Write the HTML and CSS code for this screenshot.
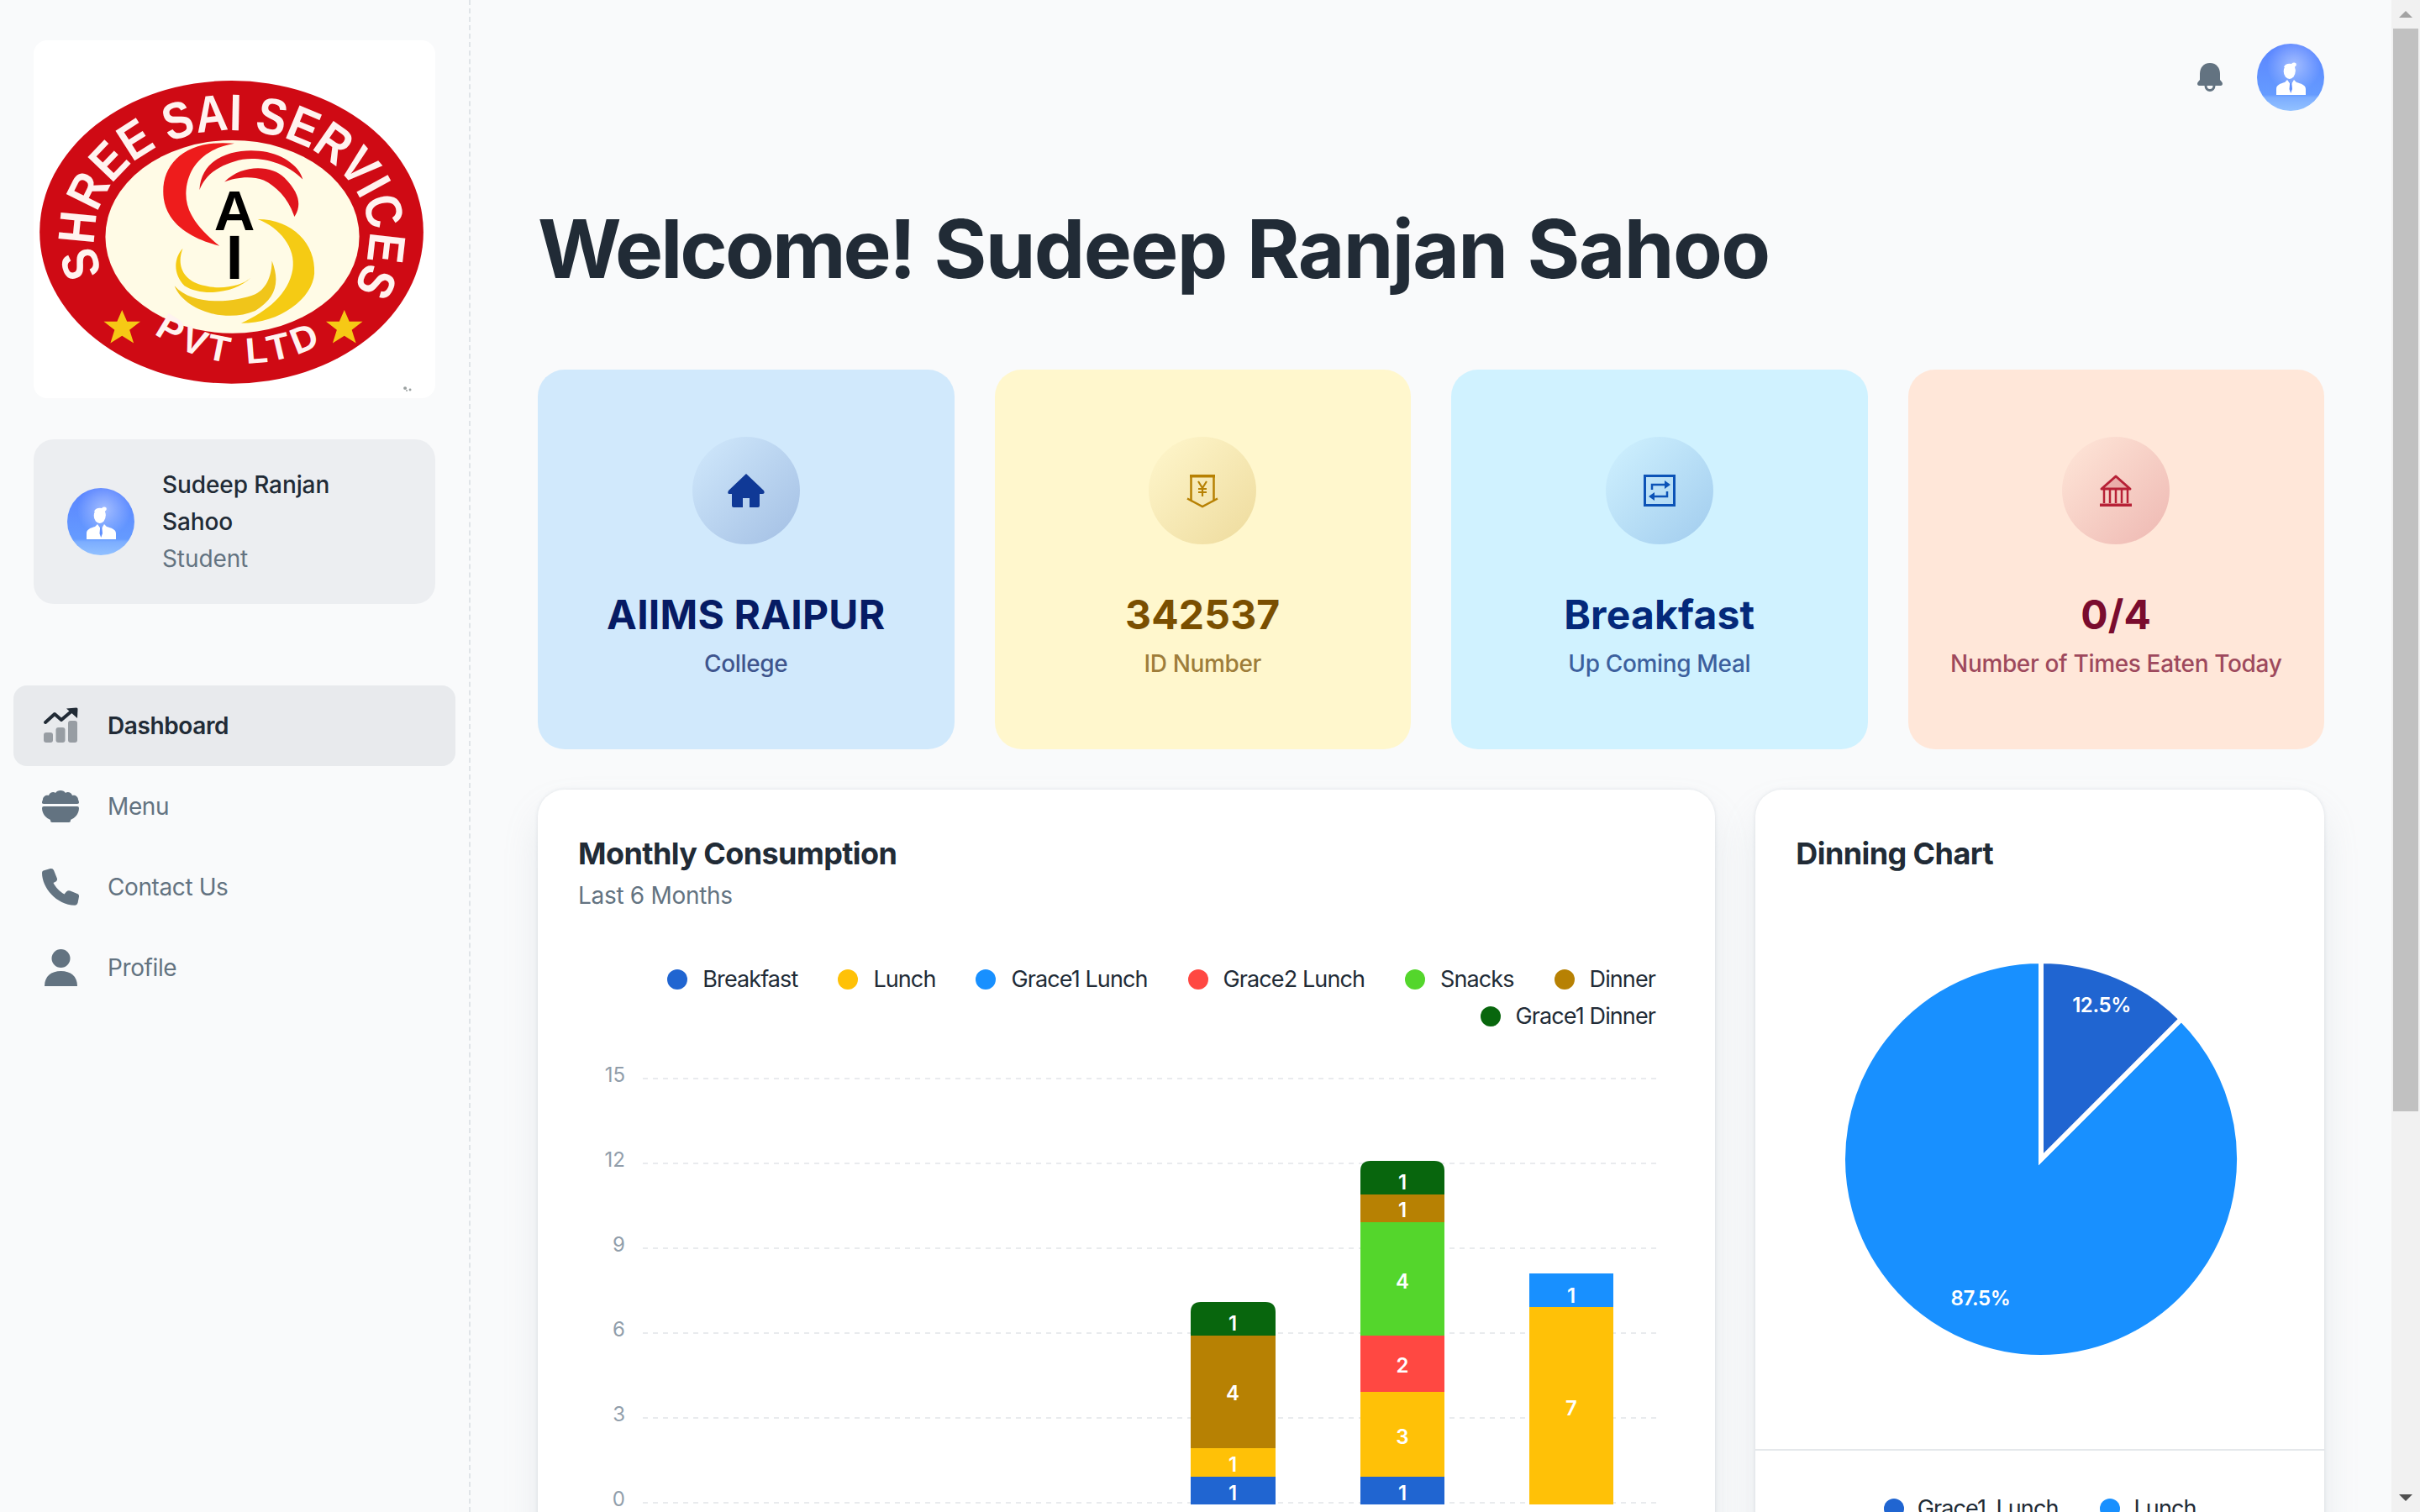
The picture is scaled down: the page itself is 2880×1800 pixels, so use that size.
FILE: index.html
```html
<!DOCTYPE html>
<html>
  <head>
    <title>Dashboard</title>
    <link rel="stylesheet" href="styles.css">
  </head>
  <body>
    <aside class="sidebar">
      <div class="logo">
        <svg viewBox="0 0 480 430" width="478" height="426">
          <defs>
            <path id="logoTop" d="M82 280A165 128 0 1 1 340 336"/>
            <path id="logoBottom" d="M143 352Q238 418 348 364"/>
          </defs>
          <ellipse cx="236.5" cy="230.5" rx="230.5" ry="182" fill="#cf0a14"/>
          <ellipse cx="237.5" cy="236" rx="152.5" ry="116" fill="#fffbe6"/>
          <text class="logo-ring" font-size="62"><textPath href="#logoTop" textLength="572" lengthAdjust="spacingAndGlyphs">SHREE SAI SERVICES</textPath></text>
          <text class="logo-ring" font-size="44"><textPath href="#logoBottom" textLength="212">PVT LTD</textPath></text>
          <path fill="#f6c915" d="M105 324l6 14h16l-13 10 5 16-14-9-14 9 5-16-13-10h16zM372 324l6 14h16l-13 10 5 16-14-9-14 9 5-16-13-10h16z"/>
          <path fill="#ee1c1c" d="M240 124C180 118 150 150 155 190C160 225 195 240 222 247C195 225 180 205 182 180C185 150 205 130 240 124Z"/>
          <path fill="#e0141c" d="M198 180C200 140 240 130 270 133C295 135 318 150 322 167C300 145 270 140 250 143C225 148 205 160 198 180Z"/>
          <path fill="#e0141c" d="M228 170C250 148 285 150 300 165C320 185 320 200 312 212C305 190 290 175 275 168C260 162 240 165 228 170Z"/>
          <path fill="#f5cb14" d="M268 215C310 215 338 245 336 280C334 310 295 340 248 340C280 325 305 305 310 275C314 250 295 225 268 215Z"/>
          <path fill="#f0c51a" d="M168 295C190 320 240 315 265 305C280 298 285 280 285 265C295 290 290 310 265 325C230 340 180 325 168 295Z"/>
          <path fill="#f5cb14" d="M178 250C170 270 178 290 205 295C225 300 250 295 260 285C240 305 200 308 180 295C165 280 168 260 178 250Z"/>
          <text class="logo-letter" x="240" y="228" font-size="68">A</text>
          <text class="logo-letter" x="240" y="287" font-size="75">I</text>
          <g fill="#9aa0a0"><circle cx="445" cy="418" r="2"/><circle cx="451" cy="420" r="1.5"/><circle cx="447" cy="421" r="1"/></g>
        </svg>
      </div>

      <div class="user-card">
        <svg class="avatar" viewBox="0 0 80 80">
          <use href="#avatarArt"/>
        </svg>
        <div class="user-text">
          <div class="user-name">Sudeep Ranjan Sahoo</div>
          <div class="user-role">Student</div>
        </div>
      </div>

      <nav class="nav">
        <a class="nav-item active">
          <svg class="nav-icon" viewBox="0 0 48 48">
            <g fill="#212b36" opacity=".4">
              <rect x="4" y="32" width="11" height="12" rx="3"/>
              <rect x="18.5" y="26" width="11" height="18" rx="3"/>
              <rect x="33" y="18" width="11" height="26" rx="3"/>
            </g>
            <path d="M6 20L17 10L25 17L38 6" fill="none" stroke="#212b36" stroke-width="4" stroke-linecap="round" stroke-linejoin="round"/>
            <path d="M31 3.5L43 2.5Q44.5 2.5 44.5 4L44 15Z" fill="#212b36"/>
          </svg>
          <span>Dashboard</span>
        </a>
        <a class="nav-item">
          <svg class="nav-icon" viewBox="0 0 48 48">
            <path d="M4 21C1 21 2 18 3 16C3 12 7 10 10 11C11 7 16 6 18 8C20 4 28 4 30 8C32 6 37 7 38 11C41 10 45 12 45 16C46 18 47 21 44 21Z"/>
            <path d="M4 24H44Q46 24 46 26C46 33 41 38 36 40V41Q36 43 34 43H14Q12 43 12 41V40C7 38 2 33 2 26Q2 24 4 24Z"/>
          </svg>
          <span>Menu</span>
        </a>
        <a class="nav-item">
          <svg class="nav-icon" viewBox="0 0 48 48">
            <path d="M3.500 4.500L12 2Q15 1.500 16 4L20 14Q20.500 16 18.500 17.500L15.500 19C18 24 23 29.500 28.500 32.500L31 29.500Q33 27.500 35.500 28.500L44 32Q46.500 33 46 35.500L44.500 43Q43.500 46 41 45.800C19 45 2 25 2 7Q2 5 3.500 4.500Z"/>
          </svg>
          <span>Contact Us</span>
        </a>
        <a class="nav-item">
          <svg class="nav-icon" viewBox="0 0 48 48">
            <circle cx="24.500" cy="13" r="11"/>
            <path d="M5 46C5 34 13 28 24.500 28C36 28 44 34 44 46Z"/>
          </svg>
          <span>Profile</span>
        </a>
      </nav>
    </aside>

    <main class="main">
      <header class="topbar">
        <svg class="bell" viewBox="0 0 48 48">
          <path d="M24 7C16 7 12 13 12 20V27L9.500 30Q8 33 11 34H37Q40 33 38.500 30L36 27V20C36 13 32 7 24 7Z"/>
          <path d="M19 34a5 5.500 0 0 0 10 0" fill="none" stroke="#637381" stroke-width="3"/>
        </svg>
        <svg class="avatar" viewBox="0 0 80 80">
          <g id="avatarArt">
            <defs>
              <linearGradient id="avatarBase" x1="0" y1="0" x2="0" y2="1">
                <stop offset="0" stop-color="#5a84ff"/>
                <stop offset=".76" stop-color="#659bff"/>
                <stop offset=".8" stop-color="#7cadff"/>
                <stop offset="1" stop-color="#92c1ff"/>
              </linearGradient>
              <radialGradient id="avatarGlow" cx=".55" cy=".32" r=".4">
                <stop offset="0" stop-color="#b4c9ff" stop-opacity=".8"/>
                <stop offset="1" stop-color="#b4c9ff" stop-opacity="0"/>
              </radialGradient>
            </defs>
            <circle cx="40" cy="40" r="40" fill="url(#avatarBase)"/>
            <circle cx="40" cy="40" r="40" fill="url(#avatarGlow)"/>
            <ellipse cx="38.700" cy="33" rx="7" ry="9" fill="#fff"/>
            <path d="M32 28Q34 23 41 24Q44 21.500 46.500 23.500Q47.500 26 45 27.500L45.700 33Z" fill="#fff"/>
            <path d="M23 61V54C23 49 28 47.500 33 46L36 43L39.500 48H41L44 43L47 46C52 47.500 58 49 58 54V61Z" fill="#fff"/>
            <path d="M39.200 47H41.300L42 54L40.200 59L38.500 54Z" fill="#5f8fff"/>
          </g>
        </svg>
      </header>

      <h1 class="page-title"><span class="greet">Welcome!</span> Sudeep Ranjan Sahoo</h1>

      <section class="stats">
        <div class="stat stat-blue">
          <div class="stat-icon">
            <svg viewBox="0 0 48 48">
              <path fill="currentColor" d="M24 4L45 24Q47 28 43 28H40V42Q40 44 38 44H28V33H20V44H9Q7 44 7 42V28H4Q1 28 3 24Z"/>
            </svg>
          </div>
          <div class="stat-value">AIIMS RAIPUR</div>
          <div class="stat-label">College</div>
        </div>
        <div class="stat stat-yellow">
          <div class="stat-icon">
            <svg viewBox="0 0 48 48">
              <path fill="currentColor" d="M9 5H39V8.500H9Z"/>
              <path fill="none" stroke="currentColor" stroke-width="2.500" d="M10.500 7V36L6 33.500M37.500 7V36L42 33.500M6 33.500L24 43L42 33.500"/>
              <path fill="none" stroke="currentColor" stroke-width="2.200" d="M19 13L24 21L29 13M24 21V31M19 22H29M19 26H29"/>
            </svg>
          </div>
          <div class="stat-value">342537</div>
          <div class="stat-label">ID Number</div>
        </div>
        <div class="stat stat-cyan">
          <div class="stat-icon">
            <svg viewBox="0 0 48 48">
              <rect x="6.500" y="6.500" width="35" height="35" fill="none" stroke="currentColor" stroke-width="3"/>
              <path fill="none" stroke="currentColor" stroke-width="2.500" d="M15 23V17H31M33 25V31H17"/>
              <path fill="currentColor" d="M30 12L37 17L30 22ZM18 26L11 31L18 36Z"/>
            </svg>
          </div>
          <div class="stat-value">Breakfast</div>
          <div class="stat-label">Up Coming Meal</div>
        </div>
        <div class="stat stat-red">
          <div class="stat-icon">
            <svg viewBox="0 0 48 48">
              <path fill="currentColor" fill-opacity=".2" stroke="currentColor" stroke-width="3" stroke-linejoin="round" d="M24 7L41 22H7Z"/>
              <path fill="none" stroke="currentColor" stroke-width="2.500" d="M10 23V39M17 23V39M24 23V39M31 23V39M38 23V39"/>
              <rect x="5" y="39.500" width="38" height="3.500" fill="currentColor"/>
            </svg>
          </div>
          <div class="stat-value">0/4</div>
          <div class="stat-label">Number of Times Eaten Today</div>
        </div>
      </section>

      <section class="charts">
        <div class="card card-wide">
          <h2 class="card-title">Monthly Consumption</h2>
          <p class="card-sub">Last 6 Months</p>
          <div class="legend legend-bars">
            <span class="legend-item"><i class="dot c-breakfast"></i>Breakfast</span>
            <span class="legend-item"><i class="dot c-lunch"></i>Lunch</span>
            <span class="legend-item"><i class="dot c-grace1"></i>Grace1 Lunch</span>
            <span class="legend-item"><i class="dot c-grace2"></i>Grace2 Lunch</span>
            <span class="legend-item"><i class="dot c-snacks"></i>Snacks</span>
            <span class="legend-item"><i class="dot c-dinner"></i>Dinner</span>
            <span class="legend-item"><i class="dot c-gdinner"></i>Grace1 Dinner</span>
          </div>
          <svg class="bar-chart" viewBox="688 1232 1304 600" width="1304" height="600">
            <g class="grid">
              <path d="M765 1284H1971M765 1385H1971M765 1486H1971M765 1587H1971M765 1688H1971M765 1789H1971"/>
            </g>
            <g class="axis">
              <text x="744" y="1288">15</text>
              <text x="744" y="1389">12</text>
              <text x="744" y="1490">9</text>
              <text x="744" y="1591">6</text>
              <text x="744" y="1692">3</text>
              <text x="744" y="1793">0</text>
            </g>
            <rect x="1417" y="1758" width="101" height="33" fill="#2065d1"/>
            <rect x="1417" y="1724" width="101" height="34" fill="#ffc107"/>
            <rect x="1417" y="1590" width="101" height="134" fill="#b78103"/>
            <path d="M1417 1590V1562Q1417 1550 1429 1550H1506Q1518 1550 1518 1562V1590Z" fill="#08660d"/>

            <rect x="1619" y="1758" width="100" height="33" fill="#2065d1"/>
            <rect x="1619" y="1657" width="100" height="101" fill="#ffc107"/>
            <rect x="1619" y="1590" width="100" height="67" fill="#ff4842"/>
            <rect x="1619" y="1455" width="100" height="135" fill="#54d62c"/>
            <rect x="1619" y="1422" width="100" height="33" fill="#b78103"/>
            <path d="M1619 1422V1394Q1619 1382 1631 1382H1707Q1719 1382 1719 1394V1422Z" fill="#08660d"/>

            <rect x="1820" y="1556" width="100" height="235" fill="#ffc107"/>
            <rect x="1820" y="1516" width="100" height="40" fill="#1890ff"/>

            <g class="bar-values">
              <text x="1467" y="1786">1</text>
              <text x="1467" y="1752">1</text>
              <text x="1467" y="1667">4</text>
              <text x="1467" y="1584">1</text>
              <text x="1669" y="1786">1</text>
              <text x="1669" y="1719">3</text>
              <text x="1669" y="1634">2</text>
              <text x="1669" y="1534">4</text>
              <text x="1669" y="1449">1</text>
              <text x="1669" y="1416">1</text>
              <text x="1870" y="1685">7</text>
              <text x="1870" y="1551">1</text>
            </g>
          </svg>
        </div>

        <div class="card card-narrow">
          <h2 class="card-title card-title-pie">Dinning Chart</h2>
          <svg class="pie-chart" viewBox="2089 1044 677 681" width="677" height="681">
            <g stroke="#fff" stroke-width="6">
              <path d="M2429 1380L2429 1144A236 236 0 1 0 2595.900 1213.100Z" fill="#1890ff"/>
              <path d="M2429 1380L2429 1144A236 236 0 0 1 2595.900 1213.100Z" fill="#2065d1"/>
            </g>
            <g class="pie-values">
              <text x="2501" y="1205">12.5%</text>
              <text x="2357" y="1554">87.5%</text>
            </g>
          </svg>
          <div class="legend legend-pie">
            <span class="legend-item"><i class="dot c-breakfast"></i>Grace1_Lunch</span>
            <span class="legend-item"><i class="dot c-grace1"></i>Lunch</span>
          </div>
        </div>
      </section>
    </main>

    <div class="scrollbar">
      <div class="scroll-btn"><i class="arrow-up"></i></div>
      <div class="scroll-track"><div class="scroll-thumb"></div></div>
      <div class="scroll-btn"><i class="arrow-down"></i></div>
    </div>
  </body>
</html>
```

FILE: styles.css
```css
* {
  box-sizing: border-box;
}
html, body {
  margin: 0;
  height: 100%;
}
body {
  display: flex;
  height: 1800px;
  overflow: hidden;
  background: #f9fafb;
  color: #212b36;
  font-family: Inter, "Liberation Sans", sans-serif;
  font-size: 28px;
  line-height: 44px;
}

/* sidebar */
.sidebar {
  flex: 0 0 560px;
  border-right: 2px dashed rgba(145, 158, 171, .24);
  padding-top: 48px;
}
.logo {
  width: 478px;
  height: 426px;
  margin-left: 40px;
  background: #fff;
  border-radius: 16px;
  overflow: hidden;
}
.logo svg {
  display: block;
}
.logo-ring {
  fill: #fff3f0;
  font-family: "Liberation Sans", sans-serif;
  font-weight: 700;
}
.logo-letter {
  fill: #000;
  font-family: "Liberation Sans", sans-serif;
  font-weight: 700;
  text-anchor: middle;
}
.user-card {
  display: flex;
  align-items: center;
  width: 478px;
  margin: 49px 0 0 40px;
  padding: 32px 40px;
  background: rgba(145, 158, 171, .12);
  border-radius: 24px;
}
.avatar {
  flex: 0 0 80px;
  width: 80px;
  height: 80px;
}
.user-text {
  margin-left: 33px;
  width: 240px;
  letter-spacing: -.1px;
}
.user-name {
  font-weight: 500;
}
.user-role {
  color: #637381;
}
.nav {
  margin: 97px 16px 0;
}
.nav-item {
  display: flex;
  align-items: center;
  gap: 32px;
  height: 96px;
  padding-left: 32px;
  border-radius: 16px;
  color: #637381;
  letter-spacing: -.4px;
}
.nav-item.active {
  background: rgba(145, 158, 171, .16);
  color: #212b36;
  font-weight: 600;
}
.nav-icon {
  width: 48px;
  height: 48px;
  fill: #637381;
}

/* main column */
.main {
  flex: 1;
  min-width: 0;
  padding: 0 80px;
}
.topbar {
  display: flex;
  justify-content: flex-end;
  align-items: center;
  gap: 32px;
  height: 184px;
}
.bell {
  width: 48px;
  height: 48px;
  fill: #637381;
}
.page-title {
  margin: 40px 0 72px;
  font-size: 96px;
  line-height: 144px;
  font-weight: 700;
  letter-spacing: -1.65px;
  word-spacing: 3px;
}
.greet {
  letter-spacing: -2.9px;
}

/* stat cards */
.stats {
  display: grid;
  grid-template-columns: repeat(4, 1fr);
  gap: 48px;
}
.stat {
  padding: 80px 0;
  border-radius: 32px;
  text-align: center;
}
.stat-icon {
  display: flex;
  align-items: center;
  justify-content: center;
  width: 128px;
  height: 128px;
  margin: 0 auto 48px;
  border-radius: 50%;
}
.stat-icon svg {
  width: 48px;
  height: 48px;
}
.stat-value {
  font-size: 48px;
  line-height: 72px;
  font-weight: 700;
  letter-spacing: .2px;
}
.stat-label {
  font-weight: 500;
  opacity: .72;
  letter-spacing: -.35px;
}
.stat-blue {
  background: #d1e9fc;
  color: #061b64;
}
.stat-blue .stat-icon {
  color: #103996;
  background: linear-gradient(135deg, rgba(16, 57, 150, 0), rgba(16, 57, 150, .24));
}
.stat-yellow {
  background: #fff7cd;
  color: #7a4f01;
}
.stat-yellow .stat-icon {
  color: #b78103;
  background: linear-gradient(135deg, rgba(183, 129, 3, 0), rgba(183, 129, 3, .24));
}
.stat-cyan {
  background: #d0f2ff;
  color: #04297a;
}
.stat-cyan .stat-icon {
  color: #0c53b7;
  background: linear-gradient(135deg, rgba(12, 83, 183, 0), rgba(12, 83, 183, .24));
}
.stat-red {
  background: #ffe7d9;
  color: #7a0c2e;
}
.stat-red .stat-icon {
  color: #b72136;
  background: linear-gradient(135deg, rgba(183, 33, 54, 0), rgba(183, 33, 54, .24));
}

/* charts */
.charts {
  display: grid;
  grid-template-columns: repeat(12, 1fr);
  gap: 48px;
  margin-top: 48px;
}
.card {
  height: 1000px;
  background: #fff;
  border-radius: 32px;
  box-shadow: 0 0 4px rgba(145, 158, 171, .24), 0 24px 48px -8px rgba(145, 158, 171, .24);
}
.card-wide {
  grid-column: span 8;
  padding: 48px 0 0 48px;
}
.card-narrow {
  grid-column: span 4;
  padding-top: 48px;
}
.card-title {
  margin: 0;
  font-size: 36px;
  line-height: 56px;
  font-weight: 700;
  letter-spacing: -.6px;
}
.card-title-pie {
  padding-left: 48px;
}
.card-sub {
  margin: 0;
  color: #637381;
  letter-spacing: -.3px;
}
.legend {
  display: flex;
  flex-wrap: wrap;
  gap: 0 48px;
  font-size: 27px;
  letter-spacing: -.9px;
}
.legend-bars {
  justify-content: flex-end;
  width: 1282px;
  margin-top: 56px;
}
.legend-pie {
  justify-content: center;
  gap: 0 50px;
  padding-top: 47px;
  border-top: 2px solid rgba(145, 158, 171, .24);
}
.legend-item {
  display: flex;
  align-items: center;
}
.dot {
  width: 24px;
  height: 24px;
  margin-right: 18px;
  border-radius: 50%;
}
.legend-pie .dot {
  margin-right: 16px;
}
.c-breakfast { background: #2065d1; }
.c-lunch { background: #ffc107; }
.c-grace1 { background: #1890ff; }
.c-grace2 { background: #ff4842; }
.c-snacks { background: #54d62c; }
.c-dinner { background: #b78103; }
.c-gdinner { background: #08660d; }

.bar-chart, .pie-chart {
  display: block;
}
.grid path {
  fill: none;
  stroke: #e9ebee;
  stroke-width: 2;
  stroke-dasharray: 6 6;
}
.axis text {
  fill: #919eab;
  font-size: 24px;
  text-anchor: end;
}
.bar-values text {
  fill: #fff;
  font-size: 24px;
  font-weight: 600;
  text-anchor: middle;
}
.pie-values text {
  fill: #fff;
  font-size: 24px;
  font-weight: 600;
  letter-spacing: -.4px;
  text-anchor: middle;
}

/* page scrollbar */
.scrollbar {
  display: flex;
  flex-direction: column;
  flex: 0 0 34px;
  background: #f1f1f1;
}
.scroll-btn {
  display: flex;
  align-items: center;
  justify-content: center;
  flex: 0 0 34px;
}
.arrow-up {
  border: 8px solid transparent;
  border-top: 0;
  border-bottom-color: #a3a3a3;
}
.arrow-down {
  border: 8px solid transparent;
  border-bottom: 0;
  border-top-color: #505050;
}
.scroll-track {
  flex: 1;
  padding: 0 2px;
}
.scroll-thumb {
  height: 1289px;
  background: #c1c1c1;
}
```
